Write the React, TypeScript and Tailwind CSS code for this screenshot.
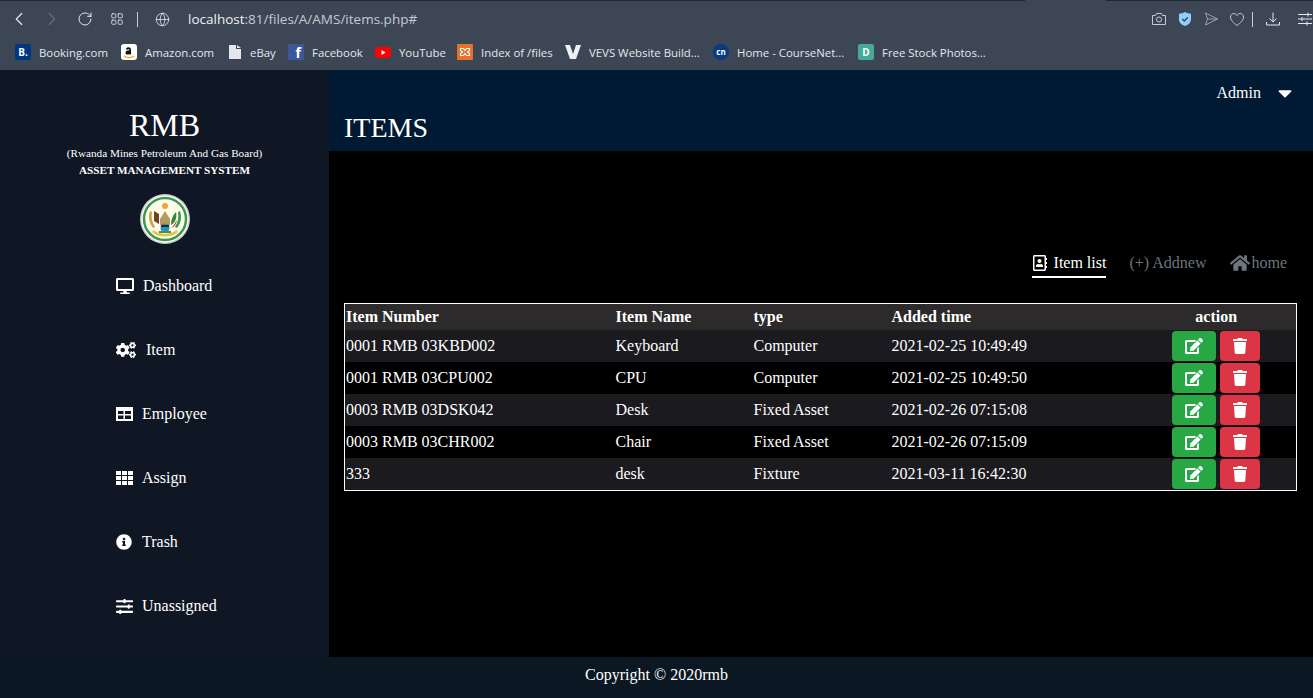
import React from 'react'
import { ChevronLeft, ChevronRight, Globe, LayoutGrid, RotateCw } from 'lucide-react'
import {
  FaCaretDown,
  FaCogs,
  FaDesktop,
  FaEdit,
  FaHome,
  FaInfoCircle,
  FaRegAddressBook,
  FaSlidersH,
  FaTrash,
} from 'react-icons/fa'

function FramedGrid() {
  return (
    <svg width="17" height="14" viewBox="0 0 17 14">
      <path fillRule="evenodd" d="M0 0h17v14H0zM2 4v3h5.500V4zm7 0v3h6V4zM2 8.500v3.500h5.500V8.500zm7 0v3.500h6V8.500z" fill="#fff" />
    </svg>
  )
}

function CellGrid() {
  return (
    <svg width="17" height="14" viewBox="0 0 17 14" fill="#fff">
      <path d="M0 0h5v4H0zM6 0h5v4H6zM12 0h5v4h-5zM0 5h5v4H0zM6 5h5v4H6zM12 5h5v4h-5zM0 10h5v4H0zM6 10h5v4H6zM12 10h5v4h-5z" />
    </svg>
  )
}

const navItems = [
  { label: 'Dashboard', icon: <FaDesktop size={18} />, gap: 'gap-[9px]' },
  { label: 'Item', icon: <FaCogs size={20} />, gap: 'gap-[10px]' },
  { label: 'Employee', icon: <FramedGrid />, gap: 'gap-[9px]' },
  { label: 'Assign', icon: <CellGrid />, gap: 'gap-[9px]' },
  { label: 'Trash', icon: <FaInfoCircle size={16} />, gap: 'gap-[10px]' },
  { label: 'Unassigned', icon: <FaSlidersH size={17} />, gap: 'gap-[9px]' },
]

const rows = [
  ['0001 RMB 03KBD002', 'Keyboard', 'Computer', '2021-02-25 10:49:49'],
  ['0001 RMB 03CPU002', 'CPU', 'Computer', '2021-02-25 10:49:50'],
  ['0003 RMB 03DSK042', 'Desk', 'Fixed Asset', '2021-02-26 07:15:08'],
  ['0003 RMB 03CHR002', 'Chair', 'Fixed Asset', '2021-02-26 07:15:09'],
  ['333', 'desk', 'Fixture', '2021-03-11 16:42:30'],
]

function Bookmark({ icon, label, className }: { icon: React.ReactNode; label: string; className?: string }) {
  return (
    <div className={`flex items-center gap-2 ${className ?? ''}`}>
      {icon}
      <span className="text-[11.4px] text-[#e4e8ec]">{label}</span>
    </div>
  )
}

function Tile({ bg, text, className }: { bg: string; text: string; className?: string }) {
  return (
    <span className={`flex h-4 w-4 items-center justify-center text-[10px] font-bold text-white ${bg} ${className ?? ''}`}>
      {text}
    </span>
  )
}

function BarIcons() {
  return (
    <div className="ml-auto flex items-center text-[#c5cbd2]">
      <svg width="16" height="16" viewBox="0 0 16 16" fill="none" stroke="currentColor" strokeWidth="1">
        <path d="M1.500 4.500h3l1-2h5l1 2h3v9h-13z" />
        <circle cx="8" cy="8.500" r="2.500" />
      </svg>
      <svg width="16" height="16" viewBox="0 0 16 16" className="ml-[10px]">
        <path d="M8 1c2 1.300 4 1.700 6 1.700v6c0 3-3 5.300-6 6.300-3-1-6-3.300-6-6.300v-6C4 2.700 6 2.300 8 1z" fill="#8fd0fb" />
        <path d="M5.300 8l2 2 3.400-3.500" fill="none" stroke="#3c4654" strokeWidth="1.500" />
      </svg>
      <svg width="16" height="16" viewBox="0 0 16 16" fill="none" stroke="#9aa3ad" strokeWidth="1" className="ml-[10px]">
        <path d="M2.500 2l12 6-12 6 2-6zM4.500 8h10" />
      </svg>
      <svg width="16" height="16" viewBox="0 0 16 16" fill="none" stroke="currentColor" strokeWidth="1" className="ml-[10px]">
        <path d="M8 14.500C4 11.500 1.500 9 1.500 6c0-2 1.500-3.500 3.300-3.500C6.200 2.500 7.300 3.300 8 4.500c.7-1.200 1.800-2 3.200-2 1.800 0 3.300 1.500 3.300 3.500 0 3-2.500 5.500-6.500 8.500z" />
      </svg>
      <span className="ml-[7px] h-[15px] w-px bg-[#c5cbd2]" />
      <svg width="16" height="16" viewBox="0 0 16 16" fill="none" stroke="#e4e8ec" strokeWidth="1" className="ml-[12px]">
        <path d="M8 1.500v9M4.500 7.500L8 11l3.500-3.500M1.500 11v3h13v-3" />
      </svg>
      <svg width="16" height="16" viewBox="0 0 16 16" fill="none" stroke="#e4e8ec" strokeWidth="1" className="ml-[16px]">
        <path d="M1 3.500h14M1 8h14M1 12.500h14M11 1.500v4M5 6v4M10 10.500v4" />
      </svg>
    </div>
  )
}

function BrowserBar() {
  return (
    <div className="h-[70px] shrink-0 bg-[#3c4654] font-['Open_Sans',sans-serif]">
      <div className="flex h-px">
        <div className="w-[1025px] bg-[#20262e]" />
        <div className="w-[81px]" />
        <div className="flex-1 bg-[#20262e]" />
      </div>
      <div className="flex h-[36px] items-center">
        <ChevronLeft size={22} strokeWidth={1.3} className="ml-[8px] text-[#e4e8ec]" />
        <ChevronRight size={22} strokeWidth={1.3} className="ml-[11px] text-[#67717d]" />
        <RotateCw size={16} strokeWidth={1.5} className="ml-[14px] text-[#e4e8ec]" />
        <LayoutGrid size={14} strokeWidth={1.4} className="ml-[17px] text-[#e4e8ec]" />
        <span className="ml-[13px] h-[15px] w-px bg-[#c5cbd2]" />
        <Globe size={15} strokeWidth={1.3} className="ml-[17px] text-[#e4e8ec]" />
        <div className="ml-[18px] text-[13.500px] text-[#c5cbd2]">
          <span className="text-[#eef1f4]">localhost</span>:81/files/A/AMS/items.php#
        </div>
        <BarIcons />
      </div>
      <div className="flex h-[31px] items-center pl-[15px]">
        <Bookmark icon={<Tile bg="bg-[#003580]" text="B." className="rounded-[2px]" />} label="Booking.com" className="w-[106px]" />
        <Bookmark
          icon={
            <svg width="16" height="16" viewBox="0 0 16 16">
              <rect width="16" height="16" rx="3" fill="#fff" />
              <path d="M5 4.500c1.500-1.800 5-1.500 5 1v5H8.500v-.8c-1 1.300-4 1.200-4-1 0-2 2-2.300 4-2.400 0-1.500-1.800-1.400-2.500-.3z" fill="#111" />
              <path d="M3 12c3 2 7 2 10 0" fill="none" stroke="#f90" strokeWidth="1.300" />
            </svg>
          }
          label="Amazon.com"
          className="w-[107px]"
        />
        <Bookmark
          icon={
            <svg width="14" height="16" viewBox="0 0 14 16">
              <path d="M1 1h7v4h5v10H1zM9 1l4 3H9z" fill="#e4e8ec" />
            </svg>
          }
          label="eBay"
          className="w-[60px]"
        />
        <Bookmark
          icon={
            <span className="flex h-4 w-4 items-end justify-end bg-[#3b5998] pr-[3px] text-[14px] font-bold leading-[15px] text-white">f</span>
          }
          label="Facebook"
          className="w-[87px]"
        />
        <Bookmark
          icon={
            <svg width="16" height="16" viewBox="0 0 16 16">
              <rect y="3" width="16" height="11" rx="3" fill="#f00" />
              <path d="M6.500 6l4 2.500-4 2.500z" fill="#fff" />
            </svg>
          }
          label="YouTube"
          className="w-[82px]"
        />
        <Bookmark
          icon={
            <svg width="16" height="16" viewBox="0 0 16 16">
              <rect width="16" height="16" rx="1" fill="#e8702a" />
              <path d="M3.500 4.500l3 0 1.500 2 1.500-2 3 0 0 2-2 1.500 2 1.500 0 2-3 0-1.500-2-1.500 2-3 0 0-2 2-1.500-2-1.500z" fill="none" stroke="#fff" strokeWidth="1.200" />
            </svg>
          }
          label="Index of /files"
          className="w-[108px]"
        />
        <Bookmark
          icon={
            <svg width="16" height="16" viewBox="0 0 16 16">
              <path d="M0 1h5l3 9 3-9h5l-5 14H5z" fill="#eef1f4" />
            </svg>
          }
          label="VEVS Website Build..."
          className="w-[148px]"
        />
        <Bookmark
          icon={
            <span className="flex h-4 w-4 items-center justify-center rounded-full bg-[#0a3a82] text-[8px] font-bold text-white">cn</span>
          }
          label="Home - CourseNet..."
          className="w-[145px]"
        />
        <Bookmark icon={<Tile bg="bg-[#45ab97]" text="D" className="rounded-[2px]" />} label="Free Stock Photos..." />
      </div>
    </div>
  )
}

function Emblem() {
  return (
    <svg width="50" height="50" viewBox="0 0 50 50">
      <circle cx="25" cy="25" r="25" fill="#cfcfcf" />
      <circle cx="25" cy="25" r="23.500" fill="#ffffff" />
      <circle cx="25" cy="25" r="21" fill="none" stroke="#3c9a45" strokeWidth="2.500" />
      <circle cx="25" cy="25" r="18.500" fill="#fffbe8" />
      <circle cx="25" cy="12" r="3" fill="#e8a93c" />
      <path d="M10 17c-2 6-1 12 3 17l2-1c-3-5-4-10-3-15z" fill="#c9a34a" />
      <path d="M40 17c2 6 1 12-3 17l-2-1c3-5 4-10 3-15z" fill="#3c9a45" />
      <path d="M14 17l5 3v10l-5-3z" fill="#6d4328" />
      <path d="M20 25l5-8 5 8v6H20z" fill="#b79a5e" />
      <path d="M31 31c0-6 2-10 5-13 1 5 0 10-5 13z" fill="#2f8a3c" />
      <path d="M31 34c3-2 4-6 6-8-1 4-2 7-6 8z" fill="#c24b6a" />
      <circle cx="25" cy="34" r="4.500" fill="#2d8ecb" />
      <path d="M21 31h8v2h-8z" fill="#262626" />
      <path d="M19 39h12v-2H19z" fill="#3c9a45" />
      <path d="M12 38c6 6 20 6 26 0l-1.500-2c-5 5-18 5-23 0z" fill="#e4c34a" />
    </svg>
  )
}

function Sidebar() {
  return (
    <aside className="flex w-[329px] shrink-0 flex-col items-center bg-[#0f1624] text-white">
      <h1 className="mt-[35px] text-[32px] leading-[40px]">RMB</h1>
      <p className="mt-px text-[11.200px] leading-[14px]">(Rwanda Mines Petroleum And Gas Board)</p>
      <p className="mt-[3px] text-[11.200px] font-bold leading-[14px]">ASSET MANAGEMENT SYSTEM</p>
      <div className="mt-[17px]">
        <Emblem />
      </div>
      <nav className="mt-[10px] flex w-full flex-col pl-[116px]">
        {navItems.map((item) => (
          <a key={item.label} href="#" className={`flex h-[64px] items-center text-[16px] ${item.gap}`}>
            {item.icon}
            <span>{item.label}</span>
          </a>
        ))}
      </nav>
    </aside>
  )
}

function ItemsTable() {
  return (
    <table className="mx-[15px] w-[953px] table-fixed border-collapse border border-white text-[16px] text-white">
      <colgroup>
        <col className="w-[270px]" />
        <col className="w-[138px]" />
        <col className="w-[138px]" />
        <col className="w-[244px]" />
        <col />
      </colgroup>
      <thead>
        <tr className="h-[26px] bg-[#2c2a2a] text-left">
          <th className="px-px font-bold">Item Number</th>
          <th className="px-px font-bold">Item Name</th>
          <th className="px-px font-bold">type</th>
          <th className="px-px font-bold">Added time</th>
          <th className="pl-[2px] text-center font-bold">action</th>
        </tr>
      </thead>
      <tbody>
        {rows.map((row, i) => (
          <tr key={row[0]} className={`${i === 4 ? 'h-[33px]' : 'h-[32px]'} ${i % 2 === 0 ? 'bg-[#1a1a1f]' : 'bg-black'}`}>
            {row.map((cell, j) => (
              <td key={j} className="px-px">
                {cell}
              </td>
            ))}
            <td className="px-px">
              <div className="flex justify-center gap-1 pl-px">
                <button className="flex h-[30px] w-[44px] items-center justify-center rounded-[4px] bg-[#28a745]">
                  <FaEdit size={18} />
                </button>
                <button className="flex h-[30px] w-[40px] items-center justify-center rounded-[4px] bg-[#dc3545]">
                  <FaTrash size={16} />
                </button>
              </div>
            </td>
          </tr>
        ))}
      </tbody>
    </table>
  )
}

export default function App() {
  return (
    <div className="flex h-screen flex-col overflow-hidden bg-black font-['Liberation_Serif',serif]">
      <BrowserBar />
      <div className="flex min-h-0 flex-1">
        <Sidebar />
        <main className="flex-1">
          <header className="flex h-[81px] flex-col bg-[#001a33] pl-[15px] text-white">
            <div className="flex items-center justify-end pr-[17px] pt-[12px] text-[16px] leading-[18px]">
              <span>Admin</span>
              <FaCaretDown size={22} className="ml-[13px]" />
            </div>
            <h2 className="mt-[6px] text-[28px] leading-[36px]">ITEMS</h2>
          </header>
          <div className="mt-[100px] flex items-start justify-end pr-[26px] text-[16px]">
            <a href="#" className="flex h-[27px] items-center gap-[6px] border-b-2 border-white pb-[2px] text-white">
              <FaRegAddressBook size={16} />
              Item list
            </a>
            <a href="#" className="ml-[23px] flex h-[27px] items-center pb-[4px] text-[#6c757d]">
              (+) Addnew
            </a>
            <a href="#" className="ml-[24px] flex h-[27px] items-center gap-px pb-[4px] text-[#6c757d]">
              <FaHome size={20} />
              home
            </a>
          </div>
          <div className="mt-[25px]">
            <ItemsTable />
          </div>
        </main>
      </div>
      <footer className="flex h-[41px] shrink-0 items-center justify-center bg-[#0b1722] pb-[5px] text-[16px] text-white">
        Copyright © 2020rmb
      </footer>
    </div>
  )
}
